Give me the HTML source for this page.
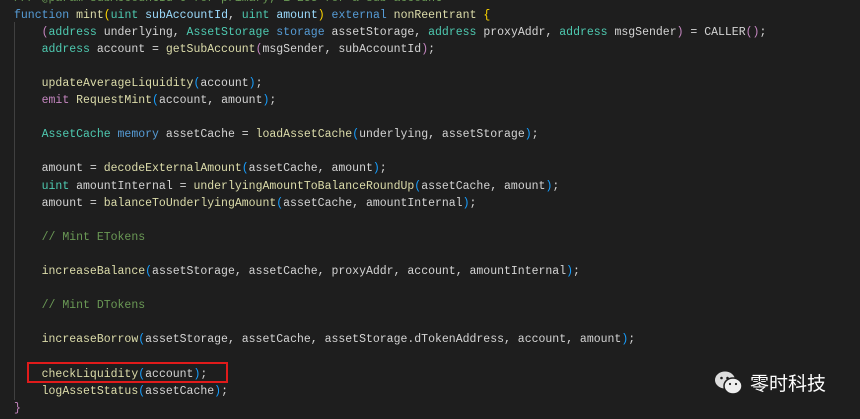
<!DOCTYPE html>
<html><head><meta charset="utf-8"><style>
body{margin:0;width:860px;height:419px;background:#1e1e1e;overflow:hidden;position:relative}
pre{margin:0;position:absolute;left:14px;top:-10.5px;font-family:"Liberation Mono",monospace;font-size:11.5px;line-height:17.1px;color:#d4d4d4;white-space:pre}
.k{color:#569cd6}.t{color:#4ec9b0}.f{color:#dcdcaa}.c{color:#6a9955}.p{color:#c586c0}.b{color:#179fff}.y{color:#ffd700}.v{color:#9cdcfe}.u{color:#4fc1ff}
.guide{position:absolute;left:14px;top:22px;width:1px;height:378px;background:#404040}
.box{position:absolute;left:27px;top:362px;width:201px;height:21px;border:2px solid #e01b1b;box-sizing:border-box}
.wm{position:absolute;left:714px;top:369px;color:#fff;font-family:"Liberation Sans","Noto Sans CJK SC",sans-serif;font-size:19px;display:flex;align-items:center;gap:6px}
</style></head><body>
<div class="guide"></div>
<pre><span class="c">/// @param subAccountId 0 for primary, 1-255 for a sub-account</span>
<span class="k">function</span> <span class="f">mint</span><span class="y">(</span><span class="t">uint</span> <span class="v">subAccountId</span>, <span class="t">uint</span> <span class="v">amount</span><span class="y">)</span> <span class="k">external</span> <span class="f">nonReentrant</span> <span class="y">{</span>
    <span class="p">(</span><span class="t">address</span> underlying, <span class="t">AssetStorage</span> <span class="k">storage</span> assetStorage, <span class="t">address</span> proxyAddr, <span class="t">address</span> msgSender<span class="p">)</span> = CALLER<span class="p">()</span>;
    <span class="t">address</span> account = <span class="f">getSubAccount</span><span class="p">(</span>msgSender, subAccountId<span class="p">)</span>;

    <span class="f">updateAverageLiquidity</span><span class="b">(</span>account<span class="b">)</span>;
    <span class="p">emit</span> <span class="f">RequestMint</span><span class="b">(</span>account, amount<span class="b">)</span>;

    <span class="t">AssetCache</span> <span class="k">memory</span> assetCache = <span class="f">loadAssetCache</span><span class="b">(</span>underlying, assetStorage<span class="b">)</span>;

    amount = <span class="f">decodeExternalAmount</span><span class="b">(</span>assetCache, amount<span class="b">)</span>;
    <span class="t">uint</span> amountInternal = <span class="f">underlyingAmountToBalanceRoundUp</span><span class="b">(</span>assetCache, amount<span class="b">)</span>;
    amount = <span class="f">balanceToUnderlyingAmount</span><span class="b">(</span>assetCache, amountInternal<span class="b">)</span>;

    <span class="c">// Mint ETokens</span>

    <span class="f">increaseBalance</span><span class="b">(</span>assetStorage, assetCache, proxyAddr, account, amountInternal<span class="b">)</span>;

    <span class="c">// Mint DTokens</span>

    <span class="f">increaseBorrow</span><span class="b">(</span>assetStorage, assetCache, assetStorage.dTokenAddress, account, amount<span class="b">)</span>;

    <span class="f">checkLiquidity</span><span class="b">(</span>account<span class="b">)</span>;
    <span class="f">logAssetStatus</span><span class="b">(</span>assetCache<span class="b">)</span>;
<span class="p">}</span></pre>
<div class="box"></div>
<div class="wm"><svg width="30" height="26" viewBox="0 0 30 26"><ellipse cx="11" cy="10" rx="10" ry="8.5" fill="#ddd"/><ellipse cx="19" cy="16" rx="9" ry="8" fill="#eee" stroke="#1e1e1e" stroke-width="1.5"/><circle cx="7.5" cy="8" r="1.3" fill="#1e1e1e"/><circle cx="13.5" cy="8" r="1.3" fill="#1e1e1e"/><circle cx="16" cy="14" r="1.1" fill="#1e1e1e"/><circle cx="22" cy="14" r="1.1" fill="#1e1e1e"/></svg><span>零时科技</span></div>
</body></html>
